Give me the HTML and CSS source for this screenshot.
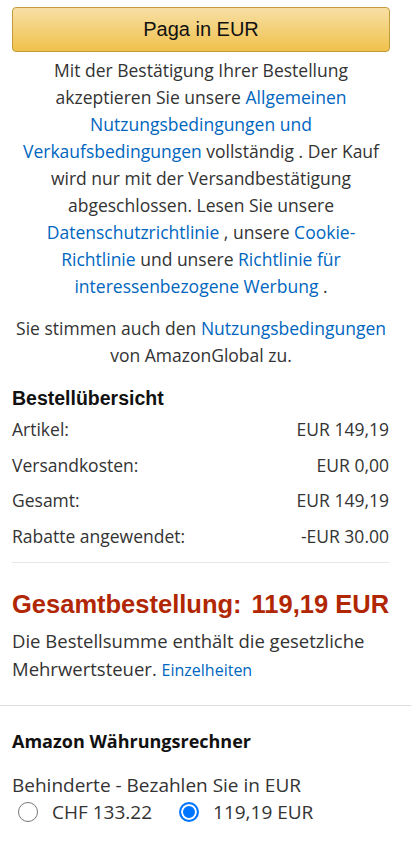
FILE: index.html
```html
<!DOCTYPE html>
<html lang="de">
<head>
    <meta charset="UTF-8">
    <meta name="viewport" content="width=device-width, initial-scale=1.0">
    <title>Bestellung</title>
    <link rel="stylesheet" href="styles.css">
</head>
<body>
    <div class="top">
        <button class="pay-btn">Paga in EUR</button>
        <p class="legal">
            Mit der Bestätigung Ihrer Bestellung akzeptieren Sie unsere
            <a href="#">Allgemeinen Nutzungsbedingungen und Verkaufsbedingungen</a>
            vollständig . Der Kauf wird nur mit der Versandbestätigung abgeschlossen. Lesen Sie unsere
            <a href="#">Datenschutzrichtlinie</a> , unsere <a href="#">Cookie-Richtlinie</a>
            und unsere <a href="#">Richtlinie für interessenbezogene Werbung</a> .
        </p>
        <p class="legal global">
            Sie stimmen auch den <a href="#">Nutzungsbedingungen</a> von AmazonGlobal zu.
        </p>
    </div>

    <div class="summary">
        <h3 class="summary-title">Bestellübersicht</h3>
        <div class="row"><span>Artikel:</span><span>EUR 149,19</span></div>
        <div class="row"><span>Versandkosten:</span><span>EUR 0,00</span></div>
        <div class="row"><span>Gesamt:</span><span>EUR 149,19</span></div>
        <div class="row"><span>Rabatte angewendet:</span><span>-EUR 30.00</span></div>
    </div>

    <div class="total">
        <div class="total-line"><span>Gesamtbestellung:</span><span>119,19 EUR</span></div>
        <p class="vat">Die Bestellsumme enthält die gesetzliche Mehrwertsteuer. <a href="#">Einzelheiten</a></p>
    </div>

    <div class="currency">
        <h4 class="currency-title">Amazon Währungsrechner</h4>
        <div class="currency-label">Behinderte - Bezahlen Sie in EUR</div>
        <div class="options">
            <label class="option"><span class="radio"></span>CHF 133.22</label>
            <label class="option"><span class="radio checked"></span>119,19 EUR</label>
        </div>
    </div>
</body>
</html>
```

FILE: styles.css
```css
body {
    margin: 0;
    font-family: "Open Sans", "Noto Sans", sans-serif;
    color: #111;
    background: #fff;
}
a {
    color: #0066c0;
    text-decoration: none;
}
.top {
    padding: 7px 21px 0 12px;
}
.pay-btn {
    display: block;
    width: 100%;
    height: 45px;
    border: 1px solid #c29b3b;
    border-radius: 4px;
    background: linear-gradient(#f7dfa5, #f0c14b);
    font-family: "Liberation Sans", Arial, sans-serif;
    font-size: 20px;
    color: #111;
}
.legal {
    margin: 5px 4px 0;
    text-align: center;
    font-size: 17.5px;
    line-height: 27px;
    color: #333;
}
.legal.global {
    margin: 15px -4px 0;
}
.summary {
    margin: 16px 22px 0 12px;
    padding-bottom: 8px;
    border-bottom: 1px solid #e7e7e7;
}
.summary-title {
    margin: 0 0 1px;
    font-family: "Liberation Sans", Arial, sans-serif;
    font-size: 19.5px;
    line-height: 26px;
    color: #111;
}
.row {
    display: flex;
    justify-content: space-between;
    font-size: 17.5px;
    line-height: 35.5px;
    color: #333;
}
.total {
    padding: 26px 12px 21px;
    border-bottom: 1px solid #ddd;
}
.total-line {
    display: flex;
    gap: 10px;
    font-family: "Liberation Sans", Arial, sans-serif;
    font-size: 25.5px;
    font-weight: bold;
    line-height: 30px;
    color: #b12704;
}
.vat {
    margin: 8px 0 0;
    font-size: 18.5px;
    line-height: 28px;
    color: #333;
}
.vat a {
    font-size: 16px;
}
.currency {
    padding: 22px 12px 20px;
}
.currency-title {
    margin: 0 0 18px;
    font-size: 18px;
    line-height: 26px;
    color: #111;
}
.currency-label {
    font-size: 19px;
    line-height: 26px;
    color: #333;
}
.options {
    display: flex;
    gap: 27px;
    margin-top: 1px;
    padding-left: 6px;
}
.option {
    display: flex;
    align-items: center;
    gap: 14px;
    font-size: 19px;
    color: #333;
}
.radio {
    width: 20px;
    height: 20px;
    border: 1px solid #767676;
    border-radius: 50%;
    box-sizing: border-box;
}
.radio.checked {
    border: 2px solid #0075ff;
    box-shadow: inset 0 0 0 2px #fff;
    background: #0075ff;
}
```
